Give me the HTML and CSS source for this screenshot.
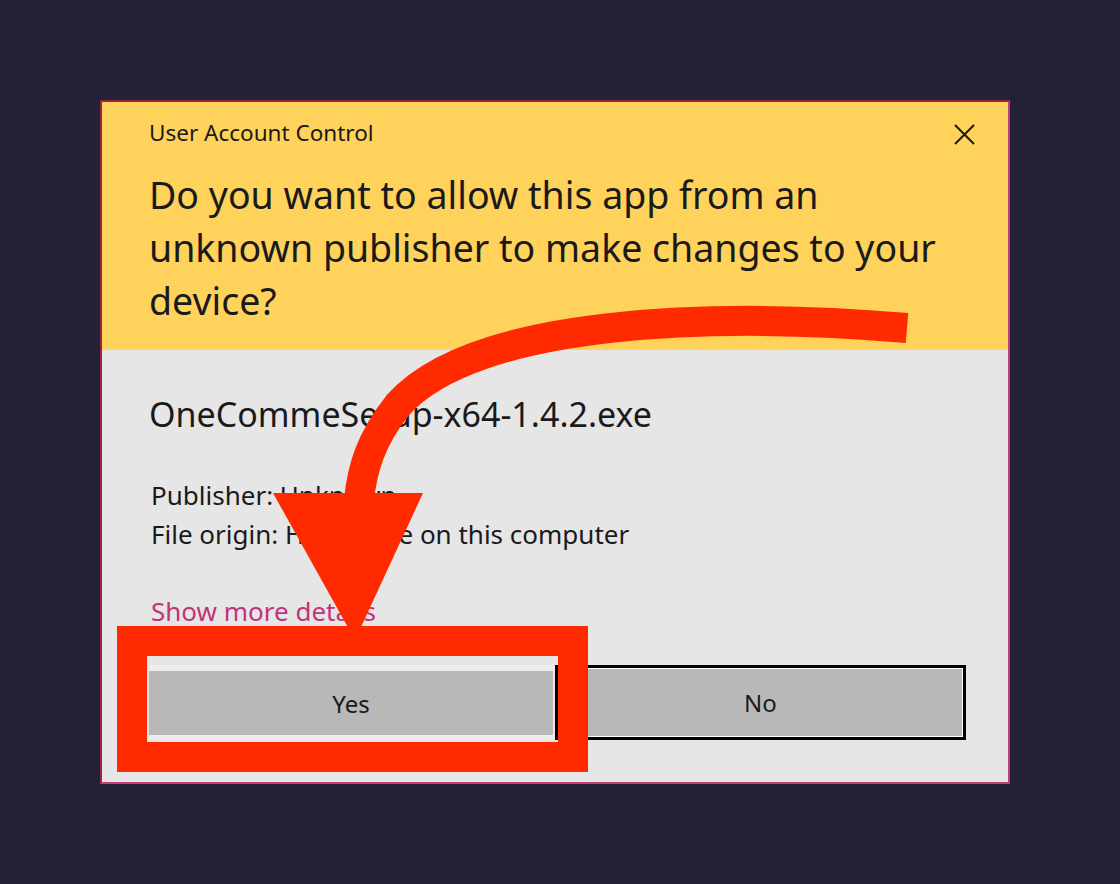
FILE: index.html
```html
<!DOCTYPE html>
<html lang="en">
<head>
  <meta charset="UTF-8" />
  <meta name="viewport" content="width=device-width, initial-scale=1.0" />
  <title>User Account Control</title>
  <link rel="stylesheet" href="styles.css">
</head>
<body>
  <div class="dialog">
    <!-- Yellow header -->
    <div class="dialog-head">
      <div class="head-row">
        <span class="caption">User Account Control</span>
        <span class="close">
          <svg width="21" height="21" viewBox="0 0 21 21">
            <path d="M1 1 L20 20 M20 1 L1 20" stroke="#1a1a1a" stroke-width="2" fill="none" />
          </svg>
        </span>
      </div>
      <h1 class="question">Do you want to allow this app from an unknown publisher to make changes to your device?</h1>
    </div>

    <!-- Grey body -->
    <div class="dialog-body">
      <div class="filename">OneCommeSetup-x64-1.4.2.exe</div>
      <div class="info">
        <div>Publisher: Unknown</div>
        <div>File origin: Hard drive on this computer</div>
      </div>
      <a class="details" href="#">Show more details</a>
      <div class="buttons">
        <button class="btn btn-yes">Yes</button>
        <button class="btn btn-no">No</button>
      </div>
    </div>
  </div>

  <!-- Red annotation drawn over the screenshot -->
  <svg class="markup" width="1120" height="884" viewBox="0 0 1120 884">
    <path d="M907 328 C 720 312, 475 318, 398 405 C 370 440, 362 470, 359 500" stroke="#ff2a00" stroke-width="30" fill="none" />
    <polygon points="273,493 423,493 355,640" fill="#ff2a00" />
    <rect x="132" y="641" width="441" height="116" stroke="#ff2a00" stroke-width="30" fill="none" />
  </svg>
</body>
</html>
```

FILE: styles.css
```css
/* Dark backdrop with a UAC style dialog */
body {
  margin: 0;
  padding: 100px 0 0 100px;
  background: #242136;
  font-family: 'Noto Sans', 'Open Sans', sans-serif;
  color: #1a1a1a;
  width: 1120px;
  height: 884px;
  box-sizing: border-box;
  position: relative;
  overflow: hidden;
}
.dialog {
  width: 910px;
  height: 684px;
  box-sizing: border-box;
  border: 2px solid #c43a72;
  border-top-color: #9a2046;
  border-left-color: #9a2046;
  background: #e6e6e6;
  display: flex;
  flex-direction: column;
}
.dialog-head {
  flex-shrink: 0;
  background: #ffd25c;
  height: 248px;
  box-sizing: border-box;
  padding: 16px 33px 0 47px;
}
.head-row {
  display: flex;
  justify-content: space-between;
  align-items: center;
  height: 30px;
}
.caption {
  font-size: 22.5px;
  line-height: 30px;
}
.close {
  display: flex;
  margin-top: 2px;
}
.question {
  margin: 20px 0 0;
  font-size: 37.5px;
  font-weight: normal;
  line-height: 53px;
  max-width: 810px;
}
.dialog-body {
  padding: 42px 42px 0 47px;
  display: flex;
  flex-direction: column;
}
.filename {
  font-size: 34px;
  line-height: 44px;
}
.info {
  margin-top: 40px;
  font-size: 26px;
  line-height: 39px;
  padding-left: 2px;
}
.details {
  margin-top: 38px;
  padding-left: 2px;
  font-size: 26px;
  line-height: 39px;
  color: #c2337a;
  text-decoration: none;
  align-self: flex-start;
}
.buttons {
  margin-top: 34px;
  display: flex;
  gap: 1px;
  flex-shrink: 0;
}
.btn {
  font-family: inherit;
  font-size: 24px;
  color: #1a1a1a;
  height: 75px;
  box-sizing: border-box;
  background: #b8b8b8;
  padding: 0;
  flex-shrink: 0;
}
.btn-yes {
  width: 405px;
  border: 6px solid #ececec;
  border-left-width: 0;
  border-right-width: 1px;
  border-bottom-width: 5px;
}
.btn-no {
  width: 411px;
  border: 3px solid #000;
  box-shadow: inset 0 0 0 1px #fff;
}
.markup {
  position: absolute;
  left: 0;
  top: 0;
  pointer-events: none;
}
```
